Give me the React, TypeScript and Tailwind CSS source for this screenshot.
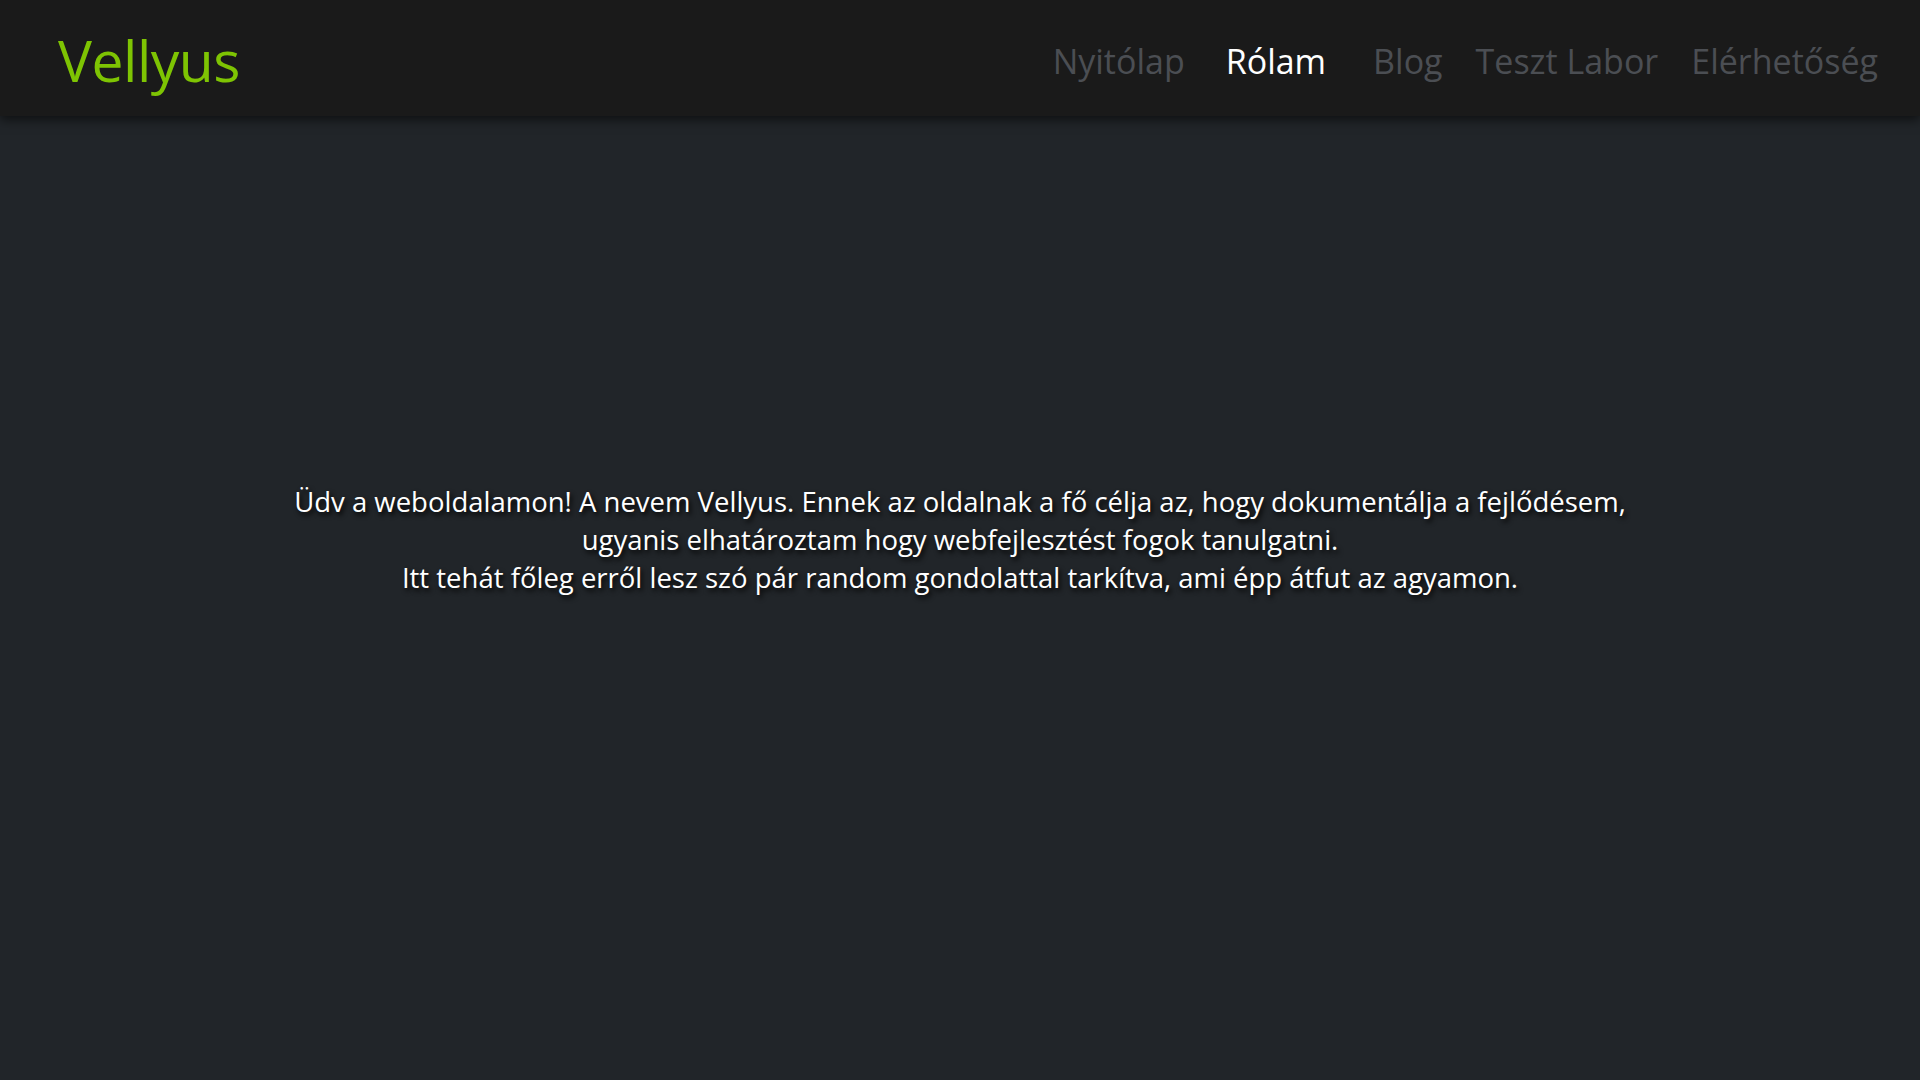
const NAV_ITEMS = [
  { label: "Nyitólap", active: false, className: "" },
  { label: "Rólam", active: true, className: "ml-[8px] mr-[14px]" },
  { label: "Blog", active: false, className: "" },
  { label: "Teszt Labor", active: false, className: "" },
  { label: "Elérhetőség", active: false, className: "" },
];

export default function App() {
  return (
    <div className="min-h-screen bg-[#212529] font-['Segoe_UI','Open_Sans',sans-serif]">
      {/* top bar — logo left, page links right */}
      <header className="relative z-10 flex h-[116px] items-center justify-between bg-[#1a1a1a] pl-[58px] pr-[42px] pt-[5px] shadow-[0_4px_10px_rgba(0,0,0,0.55)]">
        <a href="#" className="text-[57px] leading-none tracking-[-0.5px] text-[#7ec403]">
          Vellyus
        </a>
        <nav className="flex items-center gap-[33px]">
          {NAV_ITEMS.map((item) => (
            <a
              key={item.label}
              href="#"
              className={`text-[34px] leading-none ${item.className} ${
                item.active ? "text-white" : "text-[#4b4e53]"
              }`}
            >
              {item.label}
            </a>
          ))}
        </nav>
      </header>

      <main className="flex h-[964px] items-center justify-center pb-[116px]">
        <p className="text-center text-[27.5px] leading-[38px] text-white [text-shadow:2px_3px_5px_rgba(0,0,0,0.95)]">
          Üdv a weboldalamon! A nevem Vellyus. Ennek az oldalnak a fő célja az, hogy dokumentálja a
          fejlődésem,
          <br />
          ugyanis elhatároztam hogy webfejlesztést fogok tanulgatni.
          <br />
          Itt tehát főleg erről lesz szó pár random gondolattal tarkítva, ami épp átfut az agyamon.
        </p>
      </main>
    </div>
  );
}
